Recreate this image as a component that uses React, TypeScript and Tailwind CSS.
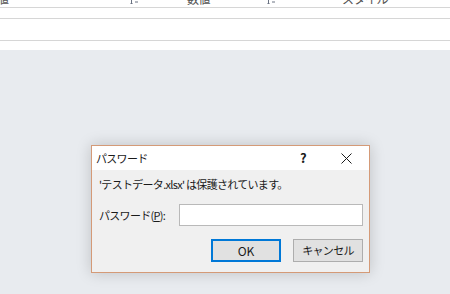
const font = { fontFamily: '"Noto Sans CJK JP", "Noto Sans", sans-serif' };

function SortIcon() {
  return (
    <svg width="9" height="7" viewBox="0 0 9 7" className="text-gray-500">
      <path d="M1.5 0v6M0.5 5l1 1 1-1M5 1h3M5 4h3" stroke="currentColor" strokeWidth="1" fill="none" />
    </svg>
  );
}

export default function App() {
  return (
    <div className="w-[450px] h-[294px] overflow-hidden bg-[#e8ebef] flex flex-col text-[#1a1a1a]" style={font}>
      {/* sheet header strip */}
      <div className="bg-white">
        <div className="h-[7px] overflow-hidden flex text-[12px] text-[#555] tracking-[-0.5px]">
          <div className="w-[133px] -ml-[3px] -mt-[9px] leading-[15px]">値</div>
          <div className="w-[57px] -mt-[2px]"><SortIcon /></div>
          <div className="w-[80px] -mt-[9px] leading-[15px]">数値</div>
          <div className="w-[75px] -mt-[2px]"><SortIcon /></div>
          <div className="-mt-[9px] leading-[15px]">スタイル</div>
        </div>
        <div className="h-[1px] bg-[#d6d6d6]" />
        <div className="h-[10px]" />
        <div className="h-[1px] bg-[#d6d6d6]" />
        <div className="h-[21px]" />
        <div className="h-[1px] bg-[#d6d6d6]" />
        <div className="h-[9px]" />
      </div>

      <div className="pt-[95px] pl-[91px]">
        <div className="w-[279px] h-[128px] border border-[#d49a77] bg-[#f0f0f0] shadow-[0_0_14px_rgba(0,0,0,0.18)] flex flex-col text-[11px] tracking-[-0.7px]">
          <div className="h-[24px] bg-white flex items-center">
            <span className="pl-[4px] flex-1">パスワード</span>
            <span className="w-[20px] text-center font-bold text-[13px] mr-[10px]">?</span>
            <span className="w-[46px] flex justify-center">
              <svg width="11" height="11" viewBox="0 0 11 11">
                <path d="M0.5 0.5l10 10M10.5 0.5l-10 10" stroke="#1a1a1a" strokeWidth="1" />
              </svg>
            </span>
          </div>
          <div className="flex flex-col px-[6px] pt-[6px]">
            <div className="h-[16px] leading-[16px] pl-[1px]">'テストデータ.xlsx' は保護されています。</div>
            <div className="mt-[12px] flex items-center">
              <span className="w-[81px] shrink-0 pl-[1px]">
                パスワード(<span className="underline">P</span>):
              </span>
              <div className="flex-1 h-[22px] bg-white border border-[#b9b9b9]" />
            </div>
            <div className="mt-[13px] flex justify-end gap-[12px]">
              <button className="w-[70px] h-[23px] bg-[#e1e1e1] border-2 border-[#0078d7] text-[12px] tracking-normal">OK</button>
              <button className="w-[70px] h-[23px] bg-[#e1e1e1] border border-[#adadad]">キャンセル</button>
            </div>
          </div>
        </div>
      </div>
    </div>
  );
}
